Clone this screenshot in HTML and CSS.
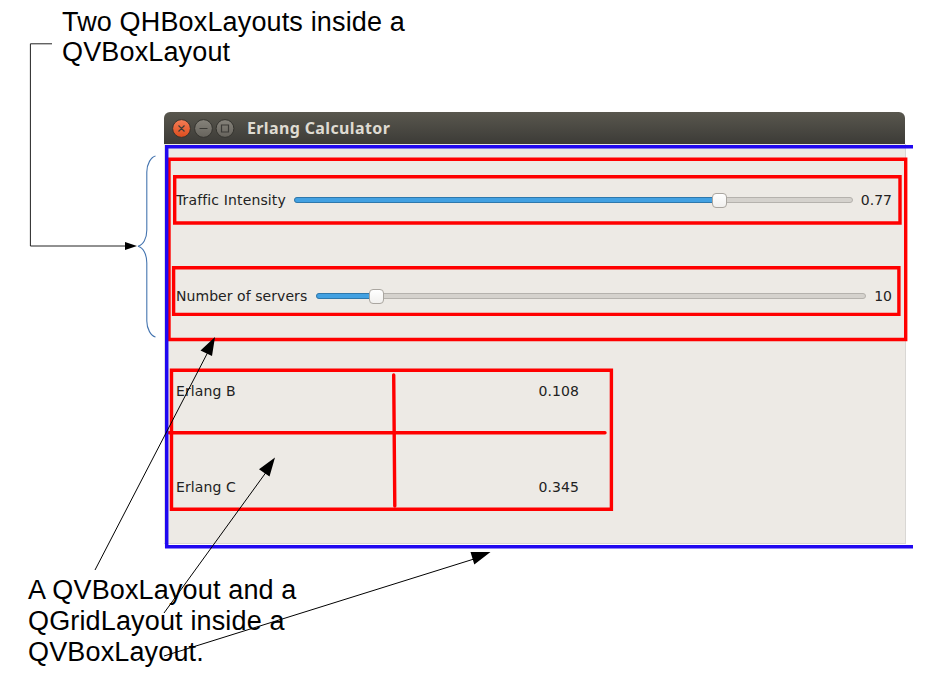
FILE: index.html
```html
<!DOCTYPE html>
<html lang="en">
<head>
<meta charset="utf-8">
<title>Erlang Calculator layouts</title>
<link rel="stylesheet" href="styles.css">
</head>
<body>
<main class="figure">
  <p class="note note-top">Two QHBoxLayouts inside a<br>QVBoxLayout</p>

  <section class="window">
    <header class="titlebar">
      <svg class="controls" width="64" height="20" viewBox="0 0 64 20">
        <defs>
          <linearGradient id="close" x2="0" y2="1"><stop stop-color="#f47d56"/><stop offset="1" stop-color="#dc4c1d"/></linearGradient>
          <linearGradient id="plain" x2="0" y2="1"><stop stop-color="#86837b"/><stop offset="1" stop-color="#66635c"/></linearGradient>
        </defs>
        <g stroke="#34332e">
          <circle cx="10.5" cy="10.5" r="8.9" fill="url(#close)"/>
          <circle cx="32.5" cy="10.5" r="8.9" fill="url(#plain)"/>
          <circle cx="54" cy="10.5" r="8.9" fill="url(#plain)"/>
        </g>
        <g fill="none" stroke="#3c3b37" stroke-width="1.2">
          <path d="M7.5 7.5l6 6M13.5 7.5l-6 6M28.5 10.5h8M50.500 7h7v7h-7z"/>
        </g>
      </svg>
      <h1 class="title">Erlang Calculator</h1>
    </header>
    <div class="content">
      <div class="row">
        <span class="label-traffic">Traffic Intensity</span>
        <div class="slider traffic"><div class="fill"></div><div class="knob"></div></div>
        <span class="value">0.77</span>
      </div>
      <div class="row">
        <span class="label-servers">Number of servers</span>
        <div class="slider servers"><div class="fill"></div><div class="knob"></div></div>
        <span class="value">10</span>
      </div>
      <div class="results">
        <span>Erlang B</span><span class="result">0.108</span>
        <span>Erlang C</span><span class="result">0.345</span>
      </div>
    </div>
  </section>

  <p class="note note-bottom">A QVBoxLayout and a<br>QGridLayout inside a<br>QVBoxLayout.</p>

  <svg class="annotations" width="945" height="675" viewBox="0 0 945 675" fill="none">
    <g stroke="#f00" stroke-width="3.4">
      <path d="M169 159.2H905.7V339.5H169z"/>
      <path d="M174.7 176.7H900V223H174.7z"/>
      <path d="M173.6 267.8H898.9V314.4H173.6z"/>
      <path d="M171.5 370.3H611.4V509.3H171.5z"/>
      <path d="M169 432.7H605M393.7 375L394.8 506" stroke-linecap="round"/>
    </g>
    <path d="M913 146.7H166.7V546.8H913" stroke="#2008f0" stroke-width="3.5"/>
    <path d="M155.5 156C151 157 146.8 164 146.8 172V230C146.8 239 143 245 138 246.3C143 247.5 146.8 254 146.8 263V321C146.8 329 151 336 155.5 337" stroke="#4575b0" stroke-width="1.1"/>
    <path d="M52 43.8H30.4V246H126" stroke="#222"/>
    <path d="M95 570L209 350M164 613L267 471M164 656L474 559" stroke="#000"/>
    <path d="M137 246L125 242V250zM215 337L200.5 350.5L212 356zM275 457.5L259 469.3L269.5 476.5zM490.5 552L470.5 552L474.3 564.5z" fill="#000"/>
  </svg>
</main>
</body>
</html>
```

FILE: styles.css
```css
* { box-sizing: border-box; }
body { margin: 0; background: #fff; }
.figure {
  position: relative;
  width: 945px;
  height: 675px;
  padding-top: 7px;
  overflow: hidden;
}
.note {
  margin: 0;
  color: #000;
  font-family: "Liberation Sans", Arial, sans-serif;
  font-size: 27px;
  letter-spacing: 0.15px;
  white-space: nowrap;
}
.note-top { height: 105px; margin-left: 62px; line-height: 30px; }
.note-bottom { margin: 31px 0 0 28px; line-height: 31px; }
.window { width: 742px; height: 432px; margin-left: 164px; }
.titlebar {
  display: flex;
  align-items: center;
  gap: 12px;
  width: 741px;
  height: 32px;
  padding-left: 7px;
  border-radius: 6px 6px 0 0;
  background: linear-gradient(#59574e, #3c3b37);
}
.title {
  margin: 0;
  color: #dfdbd2;
  font: bold 16px/32px "Noto Sans", sans-serif;
  letter-spacing: 0.37px;
}
.content {
  height: 400px;
  padding: 8px 13px 0 12px;
  border: solid #d9d7d4;
  border-width: 0 1px 1px 0;
  background: #edeae5;
  color: #222;
  font: 14px/20px "DejaVu Sans", sans-serif;
}
.row { display: flex; align-items: center; height: 96px; gap: 8px; }
.label-traffic { width: 110px; letter-spacing: 0.13px; white-space: nowrap; }
.label-servers { width: 132px; letter-spacing: 0.06px; white-space: nowrap; }
.slider {
  display: flex;
  align-items: center;
  flex: 1;
  height: 6px;
  border: 1px solid #b5b2ad;
  border-radius: 3px;
  background: #d5d2cd;
}
.fill {
  flex: none;
  height: 6px;
  border: 1px solid #2e78ac;
  border-radius: 3px 0 0 3px;
  background: #42a1e2;
  margin-left: -1px;
}
.traffic .fill { width: 420px; }
.servers .fill { width: 55px; }
.knob {
  flex: none;
  width: 15px;
  height: 15px;
  margin-left: -2px;
  border: 1px solid #aaa6a0;
  border-radius: 4px;
  background: linear-gradient(#fff, #f1f0ee);
}
.results {
  display: grid;
  grid-template-columns: 218px 185px;
  grid-template-rows: 96px 96px;
  align-items: center;
  margin-top: -1px;
  letter-spacing: 0.1px;
}
.result { text-align: right; }
.annotations { position: absolute; inset: 0; }
```
